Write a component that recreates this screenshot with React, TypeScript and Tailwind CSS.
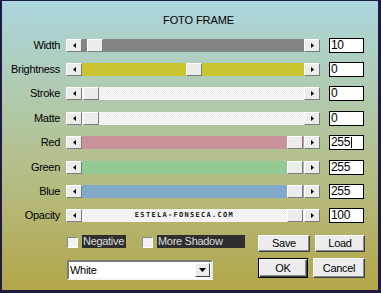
const sans = "font-['Liberation_Sans',Arial,sans-serif]";

type Row = {
  label: string;
  value: string;
  track: string;
  spacer: string;
  h: string;
  text?: string;
  caret?: boolean;
};

const dotted =
  "bg-[#f8f8f8] bg-[repeating-conic-gradient(#ebebeb_0_25%,#fcfcfc_0_50%)] bg-[length:2px_2px]";

const rows: Row[] = [
  { label: "Width", value: "10", track: "bg-[#858585]", spacer: "w-[5px]", h: "h-[24px]" },
  { label: "Brightness", value: "0", track: "bg-[#c9c531]", spacer: "w-[104px]", h: "h-[24px]" },
  { label: "Stroke", value: "0", track: dotted, spacer: "w-[1px]", h: "h-[25px]" },
  { label: "Matte", value: "0", track: dotted, spacer: "w-[1px]", h: "h-[24px]" },
  { label: "Red", value: "255", track: "bg-[#c99499]", spacer: "w-[205px]", h: "h-[25px]", caret: true },
  { label: "Green", value: "255", track: "bg-[#92c992]", spacer: "w-[205px]", h: "h-[24px]" },
  { label: "Blue", value: "255", track: "bg-[#80a9ca]", spacer: "w-[205px]", h: "h-[24px]" },
  {
    label: "Opacity",
    value: "100",
    track: dotted,
    spacer: "w-[205px]",
    h: "h-[24px]",
    text: "ESTELA-FONSECA.COM",
  },
];

const raised =
  "bg-[#ececec] border border-t-white border-l-white border-r-[#7c7c7c] border-b-[#7c7c7c]";

const Arrow = ({ dir }: { dir: "left" | "right" }) => (
  <div className={`w-[16px] h-[13px] flex items-center justify-center shrink-0 ${raised}`}>
    <svg width="3" height="5" viewBox="0 0 3 5">
      {dir === "left" ? (
        <polygon points="3,0 3,5 0,2.5" fill="#000" />
      ) : (
        <polygon points="0,0 0,5 3,2.5" fill="#000" />
      )}
    </svg>
  </div>
);

const Checkbox = () => (
  <div className="mt-[2px] w-[11px] h-[11px] bg-[#f2f2f2] border border-t-[#8a8a8a] border-l-[#8a8a8a] border-r-white border-b-white" />
);

const App = () => {
  return (
    <div
      className={`w-[381px] h-[293px] overflow-hidden border-solid border-[#1f1a44] border-t-[1px] border-l-[2px] border-r-[3px] border-b-[3px] bg-[linear-gradient(180deg,#abd6de_0%,#b1c8a6_38%,#b5b97c_68%,#b2a648_100%)] text-black ${sans}`}
    >
      <div className="pt-[12px] pl-[17px] text-center text-[11px] leading-[14px] tracking-[-0.1px]">FOTO FRAME</div>

      <div className="mt-[6px] flex flex-col">
        {rows.map((r) => (
          <div key={r.label} className={`flex items-center ${r.h}`}>
            <div className="w-[58px] text-right text-[11px] leading-[15px] tracking-[-0.3px]">{r.label}</div>
            <div className={`ml-[6px] w-[254px] h-[13px] flex ${r.track}`}>
              <Arrow dir="left" />
              <div className={`${r.spacer} shrink-0 h-full flex items-center justify-center`}>
                {r.text && (
                  <span className="font-['DejaVu_Sans_Mono',monospace] font-bold text-[7px] leading-[7px] tracking-[1.3px] text-[#1a1a1a]">
                    {r.text}
                  </span>
                )}
              </div>
              <div className={`w-[16px] h-[13px] shrink-0 ${raised}`} />
              <div className="flex-1" />
              <Arrow dir="right" />
            </div>
            <div className="ml-[9px] w-[35px] h-[15px] bg-white border border-black flex items-center pl-[1px] text-[12px] leading-[13px] tracking-[-0.3px]">
              {r.value}
              {r.caret && <span className="ml-[1px] w-px h-[11px] bg-black" />}
            </div>
          </div>
        ))}
      </div>

      <div className="mt-[8px] flex h-[17px] text-[11px] tracking-[-0.3px]">
        <div className="ml-[65px] flex items-start h-[13px]">
          <Checkbox />
          <div className="ml-[4px] w-[44px] h-[13px] bg-[#2e2e2e] text-[#dedede] leading-[13px] pl-[1px]">Negative</div>
          <div className="ml-[16px]">
            <Checkbox />
          </div>
          <div className="ml-[4px] w-[88px] h-[13px] bg-[#2e2e2e] text-[#dedede] leading-[13px] pl-[1px]">More Shadow</div>
        </div>
        <button className={`ml-[13px] w-[52px] h-[17px] leading-[15px] text-center ${raised} border-r-[#404040] border-b-[#404040] shadow-[inset_-1px_-1px_0_#8a8a8a]`}>
          Save
        </button>
        <button className={`ml-[5px] w-[50px] h-[17px] leading-[15px] text-center ${raised} border-r-[#404040] border-b-[#404040] shadow-[inset_-1px_-1px_0_#8a8a8a]`}>
          Load
        </button>
      </div>

      <div className="mt-[6px] flex h-[22px] text-[11px] tracking-[-0.3px]">
        <div className="ml-[65px] mt-[2px] w-[146px] h-[20px] bg-white border-2 border-t-[#7a7a7a] border-l-[#7a7a7a] border-r-[#e6e6e6] border-b-[#f6f6f6] flex items-center">
          <span className="pl-[1px] leading-[14px]">White</span>
          <div className={`ml-auto mr-[1px] w-[15px] h-[14px] flex items-center justify-center ${raised} border-r-[#404040] border-b-[#404040]`}>
            <svg width="7" height="4" viewBox="0 0 7 4">
              <polygon points="0,0 7,0 3.5,4" fill="#000" />
            </svg>
          </div>
        </div>
        <button className="ml-[45px] w-[50px] h-[20px] bg-[#ececec] border border-black shadow-[inset_1px_1px_0_#fff,inset_-1px_-1px_0_#404040,inset_-2px_-2px_0_#8a8a8a] leading-[18px] text-center">
          OK
        </button>
        <button className={`ml-[5px] w-[52px] h-[20px] leading-[18px] text-center ${raised} border-r-[#404040] border-b-[#404040] shadow-[inset_-1px_-1px_0_#8a8a8a]`}>
          Cancel
        </button>
      </div>
    </div>
  );
};

export default App;
